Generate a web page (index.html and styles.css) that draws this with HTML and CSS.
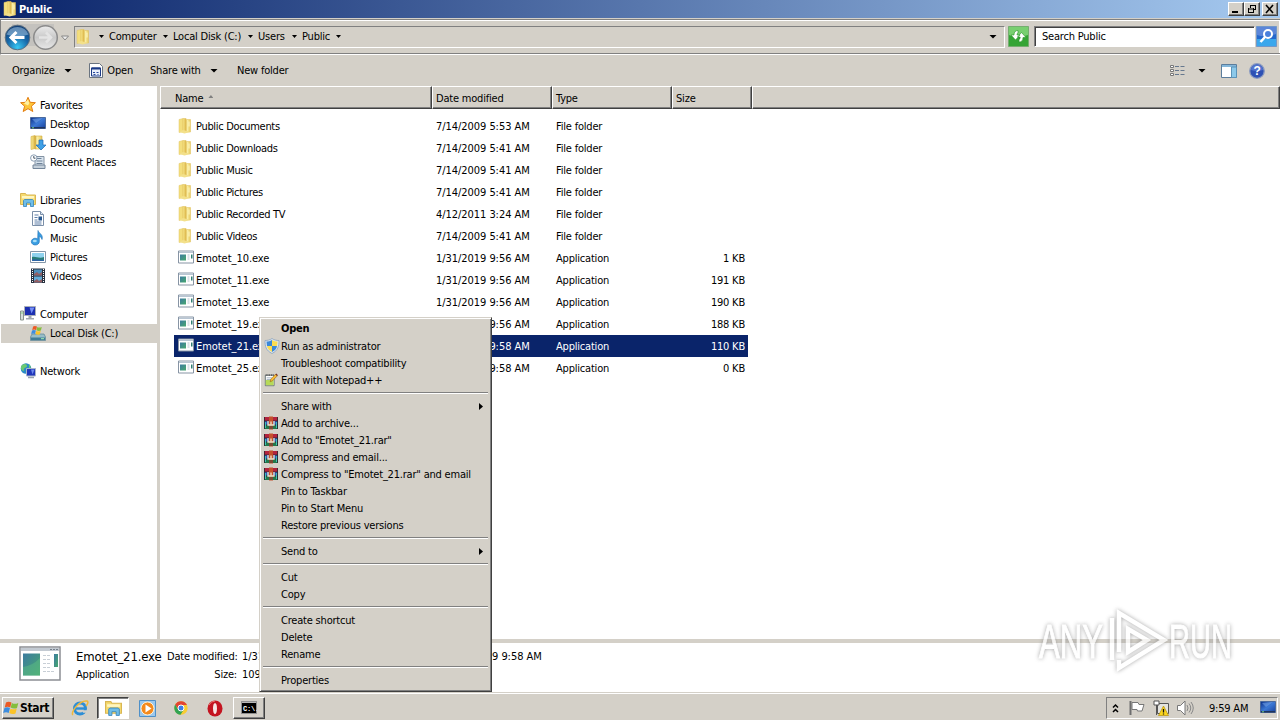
FILE: index.html
```html
<!DOCTYPE html>
<html>
<head>
	<meta charset="UTF-8">
	<title>Public</title>
	<link rel="stylesheet" href="styles.css">
</head>
<body>
<svg class="defs" width="0" height="0">
	<defs>
		<linearGradient id="gold" x1="0" x2="1"><stop offset="0" stop-color="#f8e88c"/><stop offset=".4" stop-color="#dcb548"/><stop offset=".55" stop-color="#fbf2ac"/><stop offset="1" stop-color="#e6c75a"/></linearGradient>
		<linearGradient id="screen" x1="0" y1="0" x2="1" y2="1"><stop offset="0" stop-color="#0b2f88"/><stop offset=".5" stop-color="#3c78d4"/><stop offset="1" stop-color="#173f9a"/></linearGradient>
		<linearGradient id="teal" x1="0" y1="0" x2="1" y2="1"><stop offset="0" stop-color="#3c7ba0"/><stop offset="1" stop-color="#48a86e"/></linearGradient>
		<radialGradient id="blueball" cx=".5" cy=".9" r=".9"><stop offset="0" stop-color="#38c8f4"/><stop offset=".5" stop-color="#1767a8"/><stop offset="1" stop-color="#123c72"/></radialGradient>
		<linearGradient id="grayball" x1="0" y1="0" x2="0" y2="1"><stop offset="0" stop-color="#ececec"/><stop offset=".5" stop-color="#c9c9c9"/><stop offset="1" stop-color="#e8e8e8"/></linearGradient>
	</defs>
	<symbol id="folder" viewBox="0 0 16 16">
		<path d="M2 1.500l4-1v13l-4 1z" fill="#f3de7c" stroke="#e0c468" stroke-width=".5"/>
		<path d="M6 .5h3l1 1h3.500v12.500H6z" fill="url(#gold)" stroke="#e0c05c" stroke-width=".5"/>
		<path d="M2 14l4-2 7.500 2-6 1.500z" fill="#f3e08a"/>
		<path d="M12 3.500v5" stroke="#fff8c8"/>
	</symbol>
	<symbol id="app" viewBox="0 0 16 14">
		<path d="M.5 1h15v12H.5z" fill="#fff" stroke="#8794a4"/>
		<path d="M1 1.500h14v1.500H1z" fill="#b9c6d3"/>
		<path d="M2 4.500h6v6H2z" fill="url(#teal)"/>
		<path d="M9.500 5h2M9.500 7h2M9.500 9h2" stroke="#b4c3cc"/>
		<path d="M13 4.500h1.500v4H13z" fill="#2f7f73"/>
	</symbol>
	<symbol id="star" viewBox="0 0 16 16">
		<path d="M8 .3l2.200 5 5.200.4-4 3.500 1.400 5.300L8 11.700 3.200 14.500l1.400-5.300-4-3.500 5.200-.4z" fill="#fdc53a" stroke="#e37e12"/>
		<path d="M8 2.500l1.300 3.800L8 8.500 4 6.500z" fill="#fff0a0"/>
	</symbol>
	<symbol id="desktop" viewBox="0 0 16 16">
		<path d="M.5 1.500h15v11H.5z" fill="url(#screen)" stroke="#4c6a9c"/>
		<path d="M1 11h14v1.500H1z" fill="#20345c"/>
		<path d="M2 3l11-1-7 5z" fill="#7eaef0" opacity=".5"/>
		<path d="M2 11.800h2" stroke="#6fd080"/>
	</symbol>
	<symbol id="download" viewBox="0 0 16 16">
		<path d="M1 1.500l4-1v13l-4 1zM5 1h7v13H5z" fill="url(#gold)" stroke="#d5b043" stroke-width=".6"/>
		<path d="M9 5h4v5h3l-5 5L6 10h3z" fill="#3fa0e6" stroke="#1b68b4" stroke-width=".7"/>
	</symbol>
	<symbol id="recent" viewBox="0 0 16 16">
		<path d="M5 2.500h9v9H5z" fill="#d9e4ee" stroke="#8493a3"/>
		<path d="M6.500 4.500h5M6.500 7h6M6.500 9.500h6" stroke="#6e8298"/>
		<path d="M3 11h12v3.500H3z" fill="#c5d0da" stroke="#74869a"/>
		<circle cx="3.800" cy="4" r="3.200" fill="#fff" stroke="#8a9db2"/>
		<path d="M3.800 2v2.200h1.700" fill="none" stroke="#456"/>
	</symbol>
	<symbol id="library" viewBox="0 0 16 16">
		<path d="M.5 1.500h5l1 1.500h9v9.500H.5z" fill="#f5da70" stroke="#d9b653"/>
		<path d="M2 4h12v2.500H2z" fill="#fff6c0"/>
		<path d="M3.500 14.500V8.500l1-1h8l1 1v6h-3V11h-4v3.500z" fill="#6fbde8" stroke="#3484bd" stroke-width=".8"/>
	</symbol>
	<symbol id="doc" viewBox="0 0 16 16">
		<path d="M2.500.5h8l3 3v11h-11z" fill="#fff" stroke="#7b8fa8"/>
		<path d="M10.500.5v3h3" fill="#dce8f4" stroke="#7b8fa8"/>
		<path d="M4.500 4h4M4.500 6.500h3M4.500 9h3M4.500 11h7M4.500 13h7" stroke="#5f7fa8"/>
		<path d="M8.500 5.500h3.500v4H8.500z" fill="#27578f"/>
	</symbol>
	<symbol id="music" viewBox="0 0 16 16">
		<path d="M8 .5c.6 3 5.600 3.600 4 9-.7-2.700-2.400-3.300-2.700-3.300v5.300a4 3.400 0 1 1-1.600-2.600z" fill="#3a9ee2" stroke="#1c6db4" stroke-width=".6"/>
		<ellipse cx="4.800" cy="11" rx="2" ry="1.200" fill="#a7def8"/>
	</symbol>
	<symbol id="picture" viewBox="0 0 16 16">
		<path d="M.5 2.500h15v11H.5z" fill="#fff" stroke="#8496a8"/>
		<path d="M2 4h12v8H2z" fill="#8fd2ee"/>
		<path d="M2 8c4-1 7 2 12 0v4H2z" fill="#287e78"/>
		<path d="M2 10.500c4-1 8 1 12 0V12H2z" fill="#2c65a5"/>
	</symbol>
	<symbol id="video" viewBox="0 0 16 16">
		<path d="M1 .5h14v14.500H1z" fill="#27313f"/>
		<path d="M4 1.500h8v6H4z" fill="#4d90bc"/><path d="M4 8.500h8v6H4z" fill="#63acd8"/>
		<path d="M4 6l3-2 2 2 3-2v3.500H4zM4 13l3-2 2 2 3-2v3.500H4z" fill="#935e63"/>
		<path d="M2.500 1v14M13.500 1v14" stroke="#fff" stroke-dasharray="1 1"/>
	</symbol>
	<symbol id="computer" viewBox="0 0 16 16">
		<path d="M.5 5h3v9h-3z" fill="#d6dddb" stroke="#89958e"/>
		<path d="M4.500 .5h11v9h-11z" fill="#1c2fb0" stroke="#aab0b8"/>
		<path d="M9.500 1.500h5l-3 6z" fill="#758ff5"/>
		<path d="M8.500 10h3v2h2.500v1.500H6V12h2.500z" fill="#a2a8b0"/><path d="M1.500 7h1" stroke="#3c3"/>
	</symbol>
	<symbol id="winflag" viewBox="0 0 20 18">
		<path d="M3.500 2.500q3-2 6.500 0L8.500 8.500q-3-2-6.500 0z" fill="#ec5a24"/>
		<path d="M10.500 3q3 2 7.500 0l-1.500 6q-4 1.500-7.500-.5z" fill="#84be3c"/>
		<path d="M1.700 9q3-2 6.500 0l-1.500 6q-3-2-6.500 0z" fill="#3d8ddf"/>
		<path d="M8.900 9.500q3 2 7.300 0l-1.500 6q-4 1.500-7.300-.5z" fill="#fbc328"/>
	</symbol>
	<symbol id="disk" viewBox="0 0 16 16">
		<path d="M2 9h12l1.500 3v3.500H.5V12z" fill="#98bdc8" stroke="#5b8294" stroke-width=".7"/>
		<path d="M1 12.500h14V15H1z" fill="#417c97"/><path d="M11 13.700h3" stroke="#a4f0b0"/>
		<use href="#winflag" x="1" y="0" width="12" height="11"/>
	</symbol>
	<symbol id="network" viewBox="0 0 16 16">
		<circle cx="6" cy="5.500" r="5.300" fill="#2b8bc6"/>
		<path d="M2 2c3-2 5-1 5 1S3 4 4 8C1 8 0 4 2 2zM9 1l2 3-2 2z" fill="#6bca72"/>
		<path d="M6.500 5.500h9v7.500h-9z" fill="#2036bb" stroke="#a9b5c9"/>
		<path d="M11 6.500h3.500l-2 5z" fill="#6d8bf0"/><path d="M8 14.500h6" stroke="#98a3b0" stroke-width="1.500"/>
	</symbol>
	<symbol id="shield" viewBox="0 0 16 16">
		<path d="M8 .5c2 1.500 4.500 2 7 2 0 6-1 10-7 13C2 12.500 1 8.500 1 2.500c2.500 0 5-.5 7-2z" fill="#dbe6f2" stroke="#8ca1b9" stroke-width=".8"/>
		<path d="M8 2C6 3 4.500 3.500 2.500 3.500L3 8h5z" fill="#3c88d8"/><path d="M8 2c2 1 3.500 1.500 5.500 1.500L13 8H8z" fill="#fbdc50"/>
		<path d="M3 8h5v6c-3-1.500-4.500-3-5-6z" fill="#fbdc50"/><path d="M13 8H8v6c3-1.500 4.500-3 5-6z" fill="#3c88d8"/>
	</symbol>
	<symbol id="npp" viewBox="0 0 16 16">
		<path d="M1.500 2.500h10v12h-10z" fill="#fff" stroke="#59686a"/>
		<path d="M2 8h9v6H2z" fill="#b6da57"/><path d="M3 5.500h6M3 7.500h5" stroke="#9ab"/>
		<path d="M2 2.500h9" stroke="#555" stroke-dasharray="1 1" stroke-width="2"/>
		<path d="M7 10l.8-3L13 1.500 15 3.500 9.500 9z" fill="#f8ba32" stroke="#8b5e16" stroke-width=".6"/>
		<path d="M13 1.500l1-1L16 2.500l-1 1z" fill="#7a2c1c"/>
	</symbol>
	<symbol id="rar" viewBox="0 0 14 13">
		<path d="M0 .5h14v4H0z" fill="#b3233d"/><path d="M0 4.500h14v4H0z" fill="#2d5ac0"/><path d="M0 8.500h14v4H0z" fill="#23794a"/>
		<path d="M0 4.500h14M0 8.500h14M.5.500v12M13.500.500v12" stroke="#2a2430" stroke-width=".8"/>
		<path d="M1.500 5.500v6M12.500 5.500v6" stroke="#42c0b4"/>
		<path d="M5 0h4v13H5z" fill="#c4502c"/><path d="M5 8.500h4v4H5z" fill="#7a4a34"/>
		<path d="M4 4.500v4h6v-4" fill="none" stroke="#f2e9cc" stroke-width="1.300"/>
		<path d="M7 5v3" stroke="#f2e9cc" stroke-width="1.300"/>
	</symbol>
</svg>

<div class="window">
	<div class="titlebar">
		<svg class="ico"><use href="#folder"/></svg>
		<span class="title">Public</span>
		<div class="winbtns">
			<button><svg width="12" height="10"><path d="M2 8h6" stroke="#000" stroke-width="2"/></svg></button>
			<button><svg width="12" height="10"><path d="M4 1.500h6M4.500 1v3M9.500 1v5M8 5.500h2M2 5h6M2.500 4v5M2 8.500h6M7.500 4v5" stroke="#000" fill="none"/></svg></button>
			<button class="close"><svg width="12" height="10"><path d="M2 1l7 8M9 1L2 9" stroke="#000" stroke-width="1.600"/></svg></button>
		</div>
	</div>

	<div class="navbar">
		<svg class="arrows" width="70" height="30">
			<path d="M12 2h42v22H12z" fill="#c4c2be"/>
			<circle cx="17.500" cy="15.500" r="12.300" fill="url(#blueball)" stroke="#5e7080"/>
			<path d="M6.500 12.500a11.500 10.500 0 0 1 22 0q-11 4-22 0z" fill="#a8c8e4" opacity=".55"/>
			<path d="M10.500 15.500h14M16.500 10L11 15.500l5.500 5.500" fill="none" stroke="#fff" stroke-width="3"/>
			<circle cx="45.500" cy="15.500" r="11.800" fill="url(#grayball)" stroke="#8b8b8b" stroke-width="1.500"/>
			<path d="M39 15.500h12M46 10.500l5 5-5 5" fill="none" stroke="#e4e4e4" stroke-width="2.500"/>
			<path d="M61.500 14h7L65 18z" fill="#eee" stroke="#888"/>
		</svg>
		<div class="address">
			<svg class="ico"><use href="#folder"/></svg>
			<i class="down first"></i>
			<div class="crumb c1">Computer<i class="down"></i></div>
			<div class="crumb c2">Local Disk (C:)<i class="down"></i></div>
			<div class="crumb c3">Users<i class="down"></i></div>
			<div class="crumb c4">Public<i class="down"></i></div>
			<i class="down big last"></i>
		</div>
		<svg class="refresh" width="21" height="21">
			<path d="M.5.500h20v20H.5z" fill="#35a435" stroke="#75ad70"/>
			<path d="M1 1h19v8Q9 13 1 9z" fill="#78cf70"/>
			<path d="M10 4.500Q6 4.500 6 9H3l4.500 5L12 9H9q0-2 1-2zM11 16q4 0 4-4.500h3L13.500 6.500 9.500 11h2.700q0 2.500-1.200 2.500z" fill="#fff" stroke="#289428" stroke-width=".6"/>
		</svg>
		<div class="search">Search Public</div>
		<svg class="go" width="21" height="21">
			<path d="M.5.500h20v20H.5z" fill="#2468cc" stroke="#7298c8"/>
			<path d="M1 13h19v7H1z" fill="#3ba7ec"/><path d="M1 1h19v7Q9 12 1 9z" fill="#5c86d8"/>
			<circle cx="12" cy="8" r="4" fill="#4a80dc" stroke="#fff" stroke-width="2"/>
			<path d="M9 11l-4.500 5" stroke="#fff" stroke-width="2.600"/>
		</svg>
	</div>

	<div class="toolbar">
		<div class="tool organize">Organize<i class="down big"></i></div>
		<div class="tool open">
			<svg width="15" height="15"><path d="M.5.500h10l3 3v11H.5z" fill="#fff" stroke="#6a7480"/><path d="M2.500 5h9v8h-9z" fill="#e8eefa" stroke="#1c3a86"/><path d="M2.500 5.500h9" stroke="#1c3a86" stroke-width="2"/><path d="M4 9.500h2M7.500 9.500h2M4.500 11.500h2M8.500 11.500h1" stroke="#26479c"/></svg>
			Open
		</div>
		<div class="tool share">Share with<i class="down big"></i></div>
		<div class="tool">New folder</div>
		<div class="views">
			<svg width="16" height="14"><path d="M.5 1.500h3v2h-3zM.5 5.500h3v2h-3zM.5 9.500h3v2h-3z" fill="#fff" stroke="#777"/><path d="M5 2.500h4M10.500 2.500h4M5 6.500h4M10.500 6.500h4M5 10.500h4M10.500 10.500h4" stroke="#66788e"/></svg>
			<i class="down big"></i>
			<svg class="pane" width="16" height="14"><path d="M.5.500h15v13H.5z" fill="#fff" stroke="#5b7d9c"/><path d="M1 1h14v2H1z" fill="#84b7da"/><path d="M10.500 3v10.500h5V3z" fill="#8cc9ea" stroke="#5b93b8"/></svg>
			<svg width="16" height="16"><circle cx="8" cy="8" r="7.300" fill="#2d50b4" stroke="#8c9cc0" stroke-width="1.300"/><path d="M2 7a6 5.500 0 0 1 12 0q-6 2-12 0z" fill="#6c8ce0" opacity=".6"/><text x="8" y="12" class="q">?</text></svg>
		</div>
	</div>

	<div class="main">
		<div class="sidebar">
			<div class="side top"><svg class="ico"><use href="#star"/></svg>Favorites</div>
			<div class="side"><svg class="ico"><use href="#desktop"/></svg>Desktop</div>
			<div class="side"><svg class="ico"><use href="#download"/></svg>Downloads</div>
			<div class="side"><svg class="ico"><use href="#recent"/></svg>Recent Places</div>
			<div class="side top gap"><svg class="ico"><use href="#library"/></svg>Libraries</div>
			<div class="side"><svg class="ico"><use href="#doc"/></svg>Documents</div>
			<div class="side"><svg class="ico"><use href="#music"/></svg>Music</div>
			<div class="side"><svg class="ico"><use href="#picture"/></svg>Pictures</div>
			<div class="side"><svg class="ico"><use href="#video"/></svg>Videos</div>
			<div class="side top gap"><svg class="ico"><use href="#computer"/></svg>Computer</div>
			<div class="side current"><svg class="ico"><use href="#disk"/></svg>Local Disk (C:)</div>
			<div class="side top gap"><svg class="ico"><use href="#network"/></svg>Network</div>
		</div>
		<div class="files">
			<div class="head">
				<div class="col name">Name<i class="up"></i></div>
				<div class="col">Date modified</div>
				<div class="col">Type</div>
				<div class="col">Size</div>
				<div class="col"></div>
			</div>
			<div class="rows">
				<div class="row"><svg class="ico"><use href="#folder"/></svg><span>Public Documents</span><span class="date">7/14/2009 5:53 AM</span><span>File folder</span></div>
				<div class="row"><svg class="ico"><use href="#folder"/></svg><span>Public Downloads</span><span class="date">7/14/2009 5:41 AM</span><span>File folder</span></div>
				<div class="row"><svg class="ico"><use href="#folder"/></svg><span>Public Music</span><span class="date">7/14/2009 5:41 AM</span><span>File folder</span></div>
				<div class="row"><svg class="ico"><use href="#folder"/></svg><span>Public Pictures</span><span class="date">7/14/2009 5:41 AM</span><span>File folder</span></div>
				<div class="row"><svg class="ico"><use href="#folder"/></svg><span>Public Recorded TV</span><span class="date">4/12/2011 3:24 AM</span><span>File folder</span></div>
				<div class="row"><svg class="ico"><use href="#folder"/></svg><span>Public Videos</span><span class="date">7/14/2009 5:41 AM</span><span>File folder</span></div>
				<div class="row"><svg class="app"><use href="#app"/></svg><span class="exe">Emotet_10.exe</span><span class="date">1/31/2019 9:56 AM</span><span>Application</span><span class="size">1 KB</span></div>
				<div class="row"><svg class="app"><use href="#app"/></svg><span class="exe">Emotet_11.exe</span><span class="date">1/31/2019 9:56 AM</span><span>Application</span><span class="size">191 KB</span></div>
				<div class="row"><svg class="app"><use href="#app"/></svg><span class="exe">Emotet_13.exe</span><span class="date">1/31/2019 9:56 AM</span><span>Application</span><span class="size">190 KB</span></div>
				<div class="row"><svg class="app"><use href="#app"/></svg><span class="exe">Emotet_19.exe</span><span class="date">1/31/2019 9:56 AM</span><span>Application</span><span class="size">188 KB</span></div>
				<div class="row selected"><svg class="app"><use href="#app"/></svg><span class="exe">Emotet_21.exe</span><span class="date">1/31/2019 9:58 AM</span><span>Application</span><span class="size">110 KB</span></div>
				<div class="row"><svg class="app"><use href="#app"/></svg><span class="exe">Emotet_25.exe</span><span class="date">1/31/2019 9:58 AM</span><span>Application</span><span class="size">0 KB</span></div>
			</div>
		</div>
	</div>

	<div class="details">
		<svg class="bigapp" width="42" height="35">
			<path d="M1 1h40v33H1z" fill="#fff" stroke="#8c8f94" stroke-width="1.500"/>
			<path d="M2 2h38v3H2z" fill="#c3cad2"/><path d="M31 3.500h8" stroke="#76808c" stroke-dasharray="2 1"/>
			<path d="M4 7.500h17v22H4z" fill="url(#teal)"/><path d="M4 21q9-1 17-9v17.500H4z" fill="#5cbd83" opacity=".5"/>
			<path d="M24 9.500h7M24 13.500h7M24 17.500h8M24 21.500h8M24 25.500h12" stroke="#c8cfd6" stroke-dasharray="3 1"/>
			<path d="M35 8h4v13h-4z" fill="url(#teal)"/>
		</svg>
		<div class="fileinfo"><div class="fname">Emotet_21.exe</div><div>Application</div></div>
		<div class="keys"><div>Date modified:</div><div>Size:</div></div>
		<div class="vals date"><div>1/31/2019 9:58 AM</div><div>109 KB</div></div>
		<div class="created date">1/31/2019 9:58 AM</div>
	</div>
</div>

<div class="taskbar">
	<div class="start"><svg width="20" height="18"><use href="#winflag"/></svg>Start</div>
	<div class="task ie"><svg width="18" height="18"><circle cx="9" cy="9.500" r="5.500" fill="none" stroke="#2d8ed6" stroke-width="3"/><path d="M5 9.500h9" stroke="#2d8ed6" stroke-width="2.400"/><path d="M11 11.200h6v2.500h-5z" fill="#d4d0c8"/><path d="M2 16C-1 14 8 1 16 2c2 1 0 4-1 5" fill="none" stroke="#f0b83a" stroke-width="1.500"/></svg></div>
	<div class="task active"><svg width="17" height="17"><use href="#library"/></svg></div>
	<div class="task wmp"><svg width="17" height="17"><path d="M.5.500h16v16H.5z" fill="#9cc8ec" stroke="#4f90c8"/><circle cx="8.500" cy="8.500" r="6.500" fill="#f58a1c" stroke="#fff2d8"/><path d="M6.500 4.500l6 4-6 4z" fill="#fff"/></svg></div>
	<div class="task chrome"><svg width="14" height="14"><circle cx="7" cy="7" r="6.700" fill="#f8cc32"/><path d="M1.200 3.600A6.700 6.700 0 0 1 13 4H7L4 8.500z" fill="#e24433"/><path d="M1.200 3.600A6.700 6.700 0 0 0 6.500 13.700L9.500 9 4 8.500z" fill="#32a352"/><circle cx="7" cy="7" r="3" fill="#3c7ee6" stroke="#fff"/></svg></div>
	<div class="task opera"><svg width="16" height="17"><ellipse cx="8" cy="8.500" rx="7.500" ry="8" fill="#c41420"/><ellipse cx="8" cy="8.500" rx="2" ry="5.500" fill="#f7e6e4"/><path d="M2 5q2-4 6-4" stroke="#ee7670" fill="none"/></svg></div>
	<div class="task cmd"><svg width="16" height="14"><path d="M.5.500h15v12H.5z" fill="#000" stroke="#909090"/><path d="M1 1.500h14" stroke="#b8b8b8"/><text x="2" y="10" class="prompt">C:\.</text></svg></div>
	<div class="tray">
		<svg class="chev" width="8" height="11"><path d="M1 4.500l2.500-2.500L6 4.500M1 9l2.500-2.500L6 9" fill="none" stroke="#000" stroke-width="1.500"/></svg>
		<svg class="flag" width="16" height="16"><path d="M1.500 1v14" stroke="#6e6e6e" stroke-width="2"/><path d="M3 2.500h6l1 2h5l-2 6.500H8.500L8 9.500H3z" fill="#fff" stroke="#777"/></svg>
		<svg class="net" width="16" height="16"><path d="M4.500 3.500h11v10h-11z" fill="#e4e4e0" stroke="#555"/><path d="M1 1h5v4H1zM3.500 5v10" fill="#fff" stroke="#555"/><path d="M10.500 6l5 9.500h-10z" fill="#fbd51d" stroke="#b48f0c" stroke-width=".7"/><path d="M10.500 9v3.500M10.500 13.500v1" stroke="#111" stroke-width="1.300"/></svg>
		<svg class="vol" width="18" height="16"><path d="M1.500 5.500h3L9 1v14L4.500 10.500h-3z" fill="#fff" stroke="#777"/><path d="M11 5q2 3 0 6M13 3.500q3.500 4.500 0 9M15 2q4.500 6 0 12" fill="none" stroke="#888"/></svg>
		<span class="clock">9:59 AM</span>
		<svg class="ico"><use href="#desktop"/></svg>
	</div>
</div>

<div class="menu">
	<div class="item bold">Open</div>
	<div class="item admin"><svg class="ico"><use href="#shield"/></svg>Run as administrator</div>
	<div class="item">Troubleshoot compatibility</div>
	<div class="item"><svg class="mico"><use href="#npp"/></svg>Edit with Notepad++</div>
	<div class="sep"></div>
	<div class="item">Share with<i class="right"></i></div>
	<div class="item"><svg class="mico"><use href="#rar"/></svg>Add to archive...</div>
	<div class="item"><svg class="mico"><use href="#rar"/></svg>Add to "Emotet_21.rar"</div>
	<div class="item"><svg class="mico"><use href="#rar"/></svg>Compress and email...</div>
	<div class="item"><svg class="mico"><use href="#rar"/></svg>Compress to "Emotet_21.rar" and email</div>
	<div class="item">Pin to Taskbar</div>
	<div class="item">Pin to Start Menu</div>
	<div class="item">Restore previous versions</div>
	<div class="sep"></div>
	<div class="item">Send to<i class="right"></i></div>
	<div class="sep"></div>
	<div class="item">Cut</div>
	<div class="item">Copy</div>
	<div class="sep"></div>
	<div class="item">Create shortcut</div>
	<div class="item">Delete</div>
	<div class="item">Rename</div>
	<div class="sep"></div>
	<div class="item">Properties</div>
</div>

<svg class="watermark" width="214" height="76">
	<text x="5" y="54" textLength="64" lengthAdjust="spacingAndGlyphs">ANY</text>
	<path d="M78 14v42M85 48V9l45 27-45 28v-8M94 48l19-12-19-11z"/>
	<text x="135" y="54" textLength="63" lengthAdjust="spacingAndGlyphs">RUN</text>
</svg>
</body>
</html>
```
FILE: styles.css
```css
*{
	box-sizing: border-box;
}
body{
	margin: 0;
	width: 1280px;
	height: 720px;
	overflow: hidden;
	position: relative;
	background: #d4d0c8;
	color: #000;
	font-family: "DejaVu Sans Condensed", "DejaVu Sans", sans-serif;
	font-stretch: condensed;
	font-size: 11px;
	letter-spacing: -0.2px;
	white-space: nowrap;
}
svg{
	display: block;
	flex: none;
}
.defs{
	position: absolute;
}
.ico{
	width: 16px;
	height: 16px;
}
.window{
	display: flex;
	flex-direction: column;
	height: 692px;
}

/* title bar */
.titlebar{
	display: flex;
	align-items: center;
	height: 18px;
	padding: 0 2px;
	background: linear-gradient(to right, #0a246a, #a6caf0);
	color: #fff;
}
.title{
	margin-left: 1px;
	font-weight: bold;
	flex: 1;
}
.winbtns{
	display: flex;
}
.winbtns button{
	width: 16px;
	height: 14px;
	padding: 0 0 0 1px;
	background: #d4d0c8;
	border: 1px solid;
	border-color: #fff #404040 #404040 #fff;
	box-shadow: inset -1px -1px #808080;
}
.winbtns .close{
	margin-left: 2px;
}

/* address bar */
.navbar{
	display: flex;
	height: 36px;
	margin-top: 1px;
	padding-top: 6px;
	border-top: 1px solid #808080;
	border-left: 1px solid #808080;
	border-bottom: 1px solid #fff;
	box-shadow: inset 0 1px #fff, inset 0 -1px #808080, inset -1px 0 #fff;
}
.arrows{
	margin: -4px 4px 0 -1px;
}
.address{
	display: flex;
	align-items: center;
	width: 931px;
	height: 22px;
	padding-bottom: 1px;
	border: 1px solid;
	border-color: #808080 #fff #fff #808080;
}
.down{
	width: 5px;
	height: 3px;
	flex: none;
	background: #000;
	clip-path: polygon(0 0, 100% 0, 50% 100%);
}
.big{
	width: 8px;
	height: 4px;
}
.first{
	margin: 0 5px 0 8px;
}
.last{
	margin: 0 7px 0 auto;
}
.crumb{
	display: flex;
	align-items: center;
	justify-content: space-between;
}
.c1{
	width: 59px;
	margin-right: 5px;
}
.c2{
	width: 80px;
	margin-right: 5px;
}
.c3{
	width: 39px;
	margin-right: 5px;
}
.c4{
	width: 39px;
}
.refresh{
	margin: 0 5px 0 3px;
}
.search{
	width: 221px;
	height: 21px;
	padding-left: 7px;
	line-height: 20px;
	background: #fff;
	border: 1px solid;
	border-color: #808080 #fff #fff #808080;
	box-shadow: inset 1px 1px #404040;
}
.go{
	margin-left: 1px;
}

/* command bar */
.toolbar{
	display: flex;
	align-items: center;
	height: 31px;
	padding: 0 15px 0 12px;
}
.tool{
	display: flex;
	align-items: center;
	justify-content: space-between;
}
.organize{
	width: 60px;
	margin-right: 17px;
}
.open{
	width: 44px;
	margin-right: 17px;
}
.share{
	width: 68px;
	margin-right: 19px;
}
.views{
	display: flex;
	align-items: center;
	margin-left: auto;
}
.views .down{
	margin: 0 15px 0 12px;
}
.pane{
	margin-right: 12px;
}
.q{
	font: bold 12px "Liberation Sans", sans-serif;
	fill: #fff;
	text-anchor: middle;
}

/* folders tree and file list */
.main{
	display: flex;
	flex: 1;
	min-height: 0;
	background: #fff;
}
.sidebar{
	width: 160px;
	padding-top: 10px;
	border-right: 3px solid #d4d0c8;
}
.side{
	display: flex;
	align-items: center;
	gap: 4px;
	height: 19px;
	margin-left: 1px;
	padding-left: 29px;
}
.top{
	padding-left: 19px;
}
.gap{
	margin-top: 19px;
}
.current{
	background: #d4d0c8;
}
.side svg{
	margin-top: -1px;
}
.files{
	flex: 1;
}
.head{
	display: grid;
	grid-template-columns: 272px 120px 120px 80px 1fr;
	height: 23px;
}
.col{
	display: flex;
	align-items: center;
	padding: 1px 0 0 3px;
	background: #d4d0c8;
	border: 1px solid;
	border-color: #fff #404040 #404040 #fff;
	box-shadow: inset -1px -1px #808080;
}
.name{
	padding-left: 14px;
}
.up{
	width: 5px;
	height: 3px;
	margin-left: 5px;
	margin-top: -3px;
	background: #808080;
	clip-path: polygon(50% 0, 100% 100%, 0 100%);
}
.rows{
	padding: 6px 0 0 14px;
}
.row{
	display: grid;
	grid-template-columns: 22px 240px 120px 120px 69px;
	align-items: center;
	width: 574px;
	height: 22px;
}
.row .ico{
	margin: -1px 0 0 3px;
}
.row .ico + span{
	letter-spacing: -0.32px;
}
.date,
.row .exe{
	letter-spacing: -0.05px;
}
.app{
	width: 16px;
	height: 14px;
	margin: -2px 0 0 4px;
}
.size{
	text-align: right;
}
.selected{
	background: #0a246a;
	color: #fff;
}

/* details pane */
.details{
	display: flex;
	height: 53px;
	padding: 5px 0 0 19px;
	border-top: 4px solid #d4d0c8;
	background: #fff;
	line-height: 18px;
}
.bigapp{
	margin-top: -2px;
}
.fileinfo{
	width: 91px;
	margin-left: 15px;
}
.fname{
	font-size: 13px;
	letter-spacing: -0.15px;
}
.keys{
	width: 70px;
	text-align: right;
}
.vals{
	margin-left: 5px;
	width: 206px;
}

/* taskbar */
.taskbar{
	display: flex;
	height: 28px;
	padding: 4px 2px 1px;
	border-top: 1px solid #d4d0c8;
	box-shadow: inset 0 1px #fff;
}
.start{
	display: flex;
	align-items: center;
	width: 52px;
	height: 22px;
	margin-right: 10px;
	font-weight: bold;
	font-size: 12px;
	letter-spacing: -0.35px;
	border: 1px solid;
	border-color: #fff #404040 #404040 #fff;
	box-shadow: inset -1px -1px #808080;
}
.start svg{
	width: 17px;
}
.task{
	display: flex;
	align-items: center;
	justify-content: center;
	width: 32px;
	height: 22px;
	margin-right: 2px;
}
.ie{
	margin-right: 1px;
}
.active{
	background: #fff;
	border: 1px solid;
	border-color: #404040 #fff #fff #404040;
	box-shadow: inset 1px 1px #808080;
}
.cmd{
	border: 1px solid;
	border-color: #fff #404040 #404040 #fff;
	box-shadow: inset -1px -1px #808080;
}
.prompt{
	font: bold 7px "Liberation Mono", monospace;
	fill: #fff;
}
.tray{
	display: flex;
	align-items: center;
	width: 172px;
	height: 22px;
	margin-left: auto;
	padding-left: 5px;
	border: 1px solid;
	border-color: #808080 #fff #fff #808080;
}
.flag{
	margin-left: 9px;
}
.net{
	margin-left: 8px;
}
.vol{
	margin-left: 7px;
}
.clock{
	width: 42px;
	margin: 0 9px 0 15px;
}

/* context menu */
.menu{
	position: absolute;
	left: 259px;
	top: 317px;
	width: 233px;
	height: 375px;
	padding: 2px;
	background: #d4d0c8;
	border: 1px solid;
	border-color: #d4d0c8 #404040 #404040 #d4d0c8;
	box-shadow: inset 1px 1px #fff, inset -1px -1px #808080;
}
.item{
	position: relative;
	height: 17px;
	padding-left: 19px;
	line-height: 17px;
}
.bold{
	font-weight: bold;
}
.admin{
	height: 18px;
	line-height: 19px;
}
.item svg{
	position: absolute;
	left: 2px;
	top: 1px;
}
.item .mico{
	width: 14px;
	height: 14px;
}
.right{
	position: absolute;
	right: 6px;
	top: 5px;
	width: 4px;
	height: 7px;
	background: #000;
	clip-path: polygon(0 0, 100% 50%, 0 100%);
}
.sep{
	height: 2px;
	margin: 3px 1px 4px;
	border-top: 1px solid #808080;
	border-bottom: 1px solid #fff;
}

.watermark{
	position: absolute;
	left: 1034px;
	top: 604px;
	filter: drop-shadow(0 0 2px #888);
	opacity: .75;
}
.watermark text{
	font: 49px "Liberation Sans", sans-serif;
	letter-spacing: 0;
	fill: #fff;
	stroke: #fff;
	stroke-width: 1px;
}
.watermark path{
	fill: none;
	stroke: #fff;
	stroke-width: 4.5px;
}
```
